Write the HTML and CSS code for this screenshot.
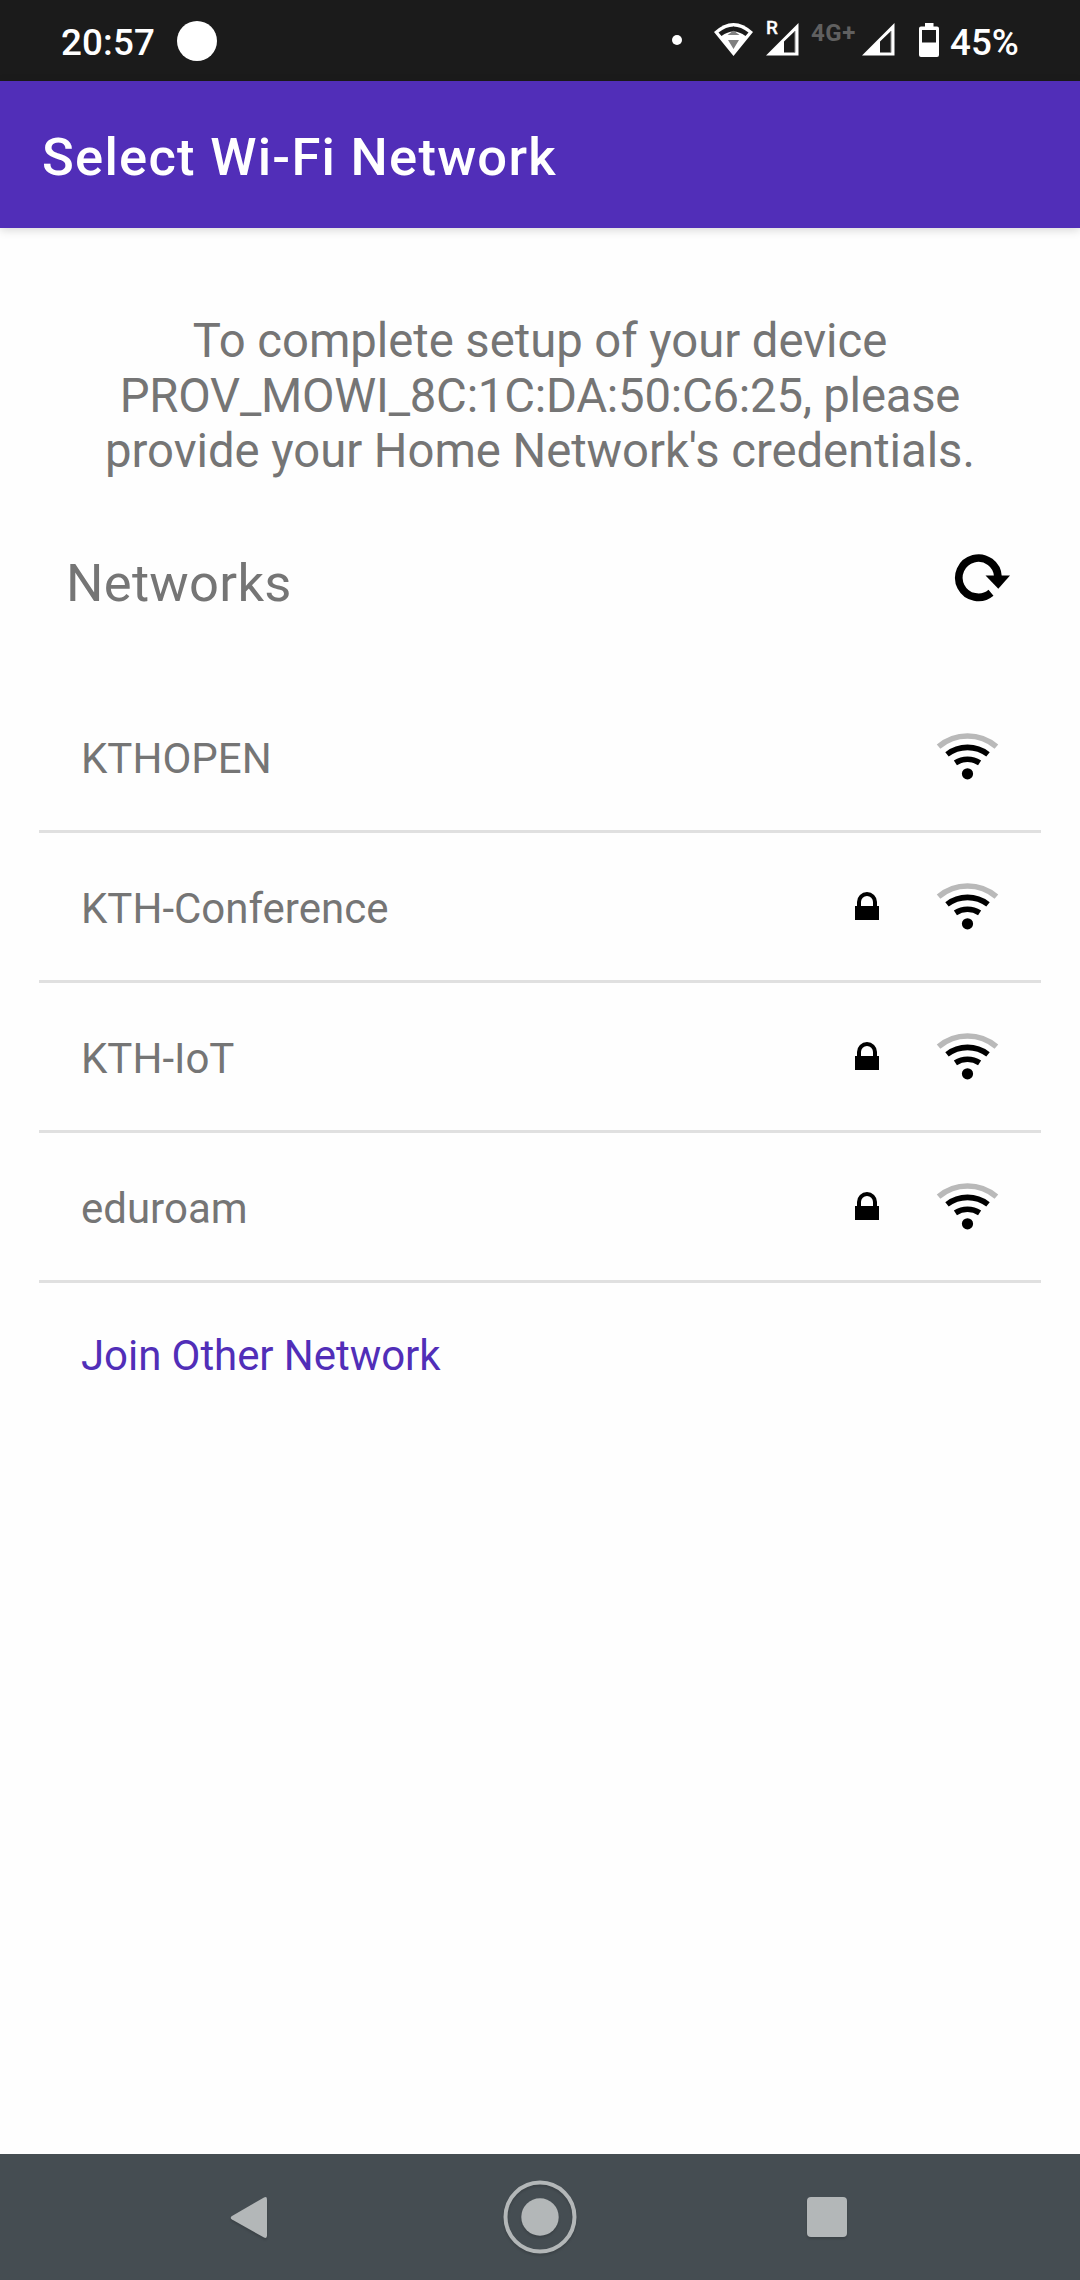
FILE: index.html
```html
<!DOCTYPE html>
<html lang="en">
<head>
<meta charset="utf-8">
<title>Select Wi-Fi Network</title>
<link rel="stylesheet" href="styles.css">
</head>
<body>
<svg class="defs" width="0" height="0">
  <symbol id="wifi" viewBox="936 725 63 63">
    <g fill="none" stroke-width="5.6">
      <path stroke="#b9b9b9" d="M938.6 746.6A44.5 44.5 0 0 1 996.4 746.6"/>
      <path stroke="#000" d="M947 754.4A33.5 33.5 0 0 1 988 754.4"/>
      <path stroke="#000" d="M955.4 762.9A22 22 0 0 1 979.6 762.9"/>
    </g>
    <circle cx="967.5" cy="773.8" r="5.6"/>
  </symbol>
  <symbol id="lock" viewBox="0 0 24 28">
    <path d="M0 14h24v14H0z"/>
    <path d="M4 15V10a8 8 0 0 1 16 0v5" fill="none" stroke="#000" stroke-width="4"/>
  </symbol>
  <symbol id="cell" viewBox="0 0 33 33">
    <path fill="#fff" fill-rule="evenodd" d="M0 32.5 32.5 0V32.5zM18 18.5V29.5H29V8z"/>
    <path fill="none" stroke="#8c8c8c" d="M18 29.5H29V8"/>
  </symbol>
</svg>
<div class="screen">
  <header class="status">
    <span class="clock">20:57</span>
    <span class="notice"></span>
    <span class="more"></span>
    <svg class="s-wifi" width="40" height="34" viewBox="0 0 40 34">
      <path fill="#fff" d="M0 9Q19.500-9 39 9L19.500 33z"/>
      <path fill="#1b1b1b" d="M4.500 9.500Q19.500-2.500 34.500 9.500L31.500 13Q19.500 4 7.500 13z"/>
      <path fill="#808080" d="M13.500 12 19.500 7.500 25.500 12zM14 17H25L19.500 26z"/>
      <path fill="#1b1b1b" d="M15 7.500 19.500 3.500 24 7.500z"/>
    </svg>
    <span class="roam"><b>R</b><svg width="33" height="33"><use href="#cell"/></svg></span>
    <span class="net">4G+</span>
    <svg class="cell2" width="33" height="33"><use href="#cell"/></svg>
    <svg class="battery" width="20" height="34" viewBox="0 0 20 34">
      <path fill="#fff" fill-rule="evenodd" d="M6 0h8.500v3.500H18a2 2 0 0 1 2 2V32a2 2 0 0 1-2 2H2a2 2 0 0 1-2-2V5.500a2 2 0 0 1 2-2H6zM3 7V19.500H17V7z"/>
    </svg>
    <span class="percent">45%</span>
  </header>
  <div class="appbar"><h1>Select Wi-Fi Network</h1></div>
  <main>
    <p class="intro">
      <span class="message">To complete setup of your device</span><br>
      <span class="device">PROV_MOWI_8C:1C:DA:50:C6:25, please</span><br>
      <span class="message">provide your Home Network's credentials.</span>
    </p>
    <div class="heading">
      <h2>Networks</h2>
      <svg width="56" height="48" viewBox="955 554 56 48">
        <path fill="none" stroke="#000" stroke-width="7.700" d="M991 592.700A19.600 19.600 0 1 1 998 577"/>
        <path d="M985.500 575.500H1010L998.300 588.800z"/>
      </svg>
    </div>
    <ul class="list">
      <li><span>KTHOPEN</span><svg class="wifi"><use href="#wifi"/></svg></li>
      <li><span>KTH-Conference</span><svg class="lock"><use href="#lock"/></svg><svg class="wifi"><use href="#wifi"/></svg></li>
      <li><span>KTH-IoT</span><svg class="lock"><use href="#lock"/></svg><svg class="wifi"><use href="#wifi"/></svg></li>
      <li><span>eduroam</span><svg class="lock"><use href="#lock"/></svg><svg class="wifi"><use href="#wifi"/></svg></li>
    </ul>
    <a class="join">Join Other Network</a>
  </main>
  <nav>
    <svg width="38" height="43" viewBox="0 0 38 43"><path d="M2 20 34 1.500Q37 0 37 3.500V39.500Q37 43 34 41.500L2 23.500Q-.5 21.500 2 20z"/></svg>
    <svg width="76" height="76" viewBox="-38 -38 76 76"><circle r="34.500" fill="none" stroke="#b3b7b8" stroke-width="4"/><circle r="18.700"/></svg>
    <svg width="40" height="40"><rect width="40" height="40" rx="4"/></svg>
  </nav>
</div>
</body>
</html>
```

FILE: styles.css
```css
* { box-sizing: border-box; margin: 0; padding: 0; }
body { font-family: Roboto, sans-serif; background: #fefefe; color: #757575; }
.defs { display: block; height: 0; }
.screen { width: 1080px; height: 2280px; display: flex; flex-direction: column; }
svg { display: block; flex: none; overflow: visible; }

.status { height: 81px; background: #1b1b1b; color: #fff; display: flex; align-items: flex-start; padding-left: 61px; font-size: 36.75px; font-weight: 500; line-height: 43px; }
.clock { width: 116px; padding-top: 21px; letter-spacing: .15px; }
.notice { width: 40px; height: 40px; border-radius: 50%; background: #fff; margin-top: 21px; }
.more { width: 10px; height: 10px; border-radius: 50%; background: #fff; margin: 35px 0 0 455px; }
.s-wifi { margin: 23px 0 0 32px; }
.roam { display: grid; width: 45px; margin: 23px 0 0 12px; }
.roam b, .roam svg { grid-area: 1 / 1; }
.roam b { font-size: 19px; font-weight: 500; line-height: 20px; margin-top: -5px; -webkit-text-stroke: .3px #fff; }
.net { width: 51px; padding-top: 12px; font-size: 24px; font-weight: 700; letter-spacing: .6px; color: #606060; white-space: nowrap; }
.cell2 { margin-top: 23px; }
.battery { margin: 23px 0 0 24px; }
.percent { padding: 21px 0 0 11px; }

.appbar { height: 147px; background: #512eb8; color: #fff; padding: 5px 0 0 42px; display: flex; align-items: center; box-shadow: 0 2px 9px rgba(0,0,0,.16); }
h1 { font-size: 52.5px; font-weight: 500; letter-spacing: 1.26px; white-space: nowrap; }

main { flex: 1; padding-top: 86px; }
.intro { text-align: center; font-size: 47.25px; line-height: 55px; white-space: nowrap; }
.message { letter-spacing: -.04px; }
.device { letter-spacing: -.22px; }
.heading { display: flex; justify-content: space-between; align-items: flex-start; margin-top: 74px; height: 130px; padding: 0 69px 0 66px; }
.heading h2 { font-size: 52.5px; font-weight: 400; line-height: 61px; letter-spacing: .3px; }
.heading svg { margin-top: 1px; }
.list { list-style: none; padding: 0 39px; }
.list li { height: 150px; border-bottom: 3px solid #e0e0e0; display: flex; align-items: center; padding: 0 42px; font-size: 42px; }
.list span { flex: 1; padding-top: 4px; }
.wifi { width: 63px; height: 63px; }
.lock { width: 24px; height: 28px; margin: 0 57px 1px 0; }
.join { display: block; padding: 48px 0 0 81px; font-size: 42px; line-height: 50px; letter-spacing: -.07px; color: #512eb8; }

nav { height: 126px; background: #454d52; display: flex; align-items: center; padding-left: 230px; fill: #b3b7b8; }
nav svg { filter: drop-shadow(0 2px 1px rgba(0,0,0,.15)); }
nav svg:nth-child(2) { margin: 0 229px 0 234px; }
```
